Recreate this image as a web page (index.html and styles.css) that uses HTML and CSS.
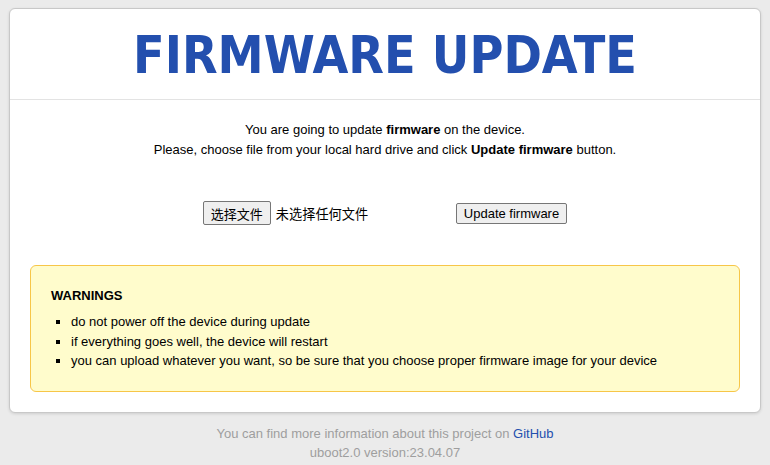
FILE: index.html
```html
<!DOCTYPE html>
<html>
<head>
<meta charset="utf-8">
<title>Firmware update</title>
<link rel="stylesheet" href="styles.css">
</head>
<body>
<div class="card">
  <div class="header"><h1 class="title">FIRMWARE UPDATE</h1></div>
  <div class="content">
    <p class="intro">You are going to update <b>firmware</b> on the device.<br>Please, choose file from your local hard drive and click <b>Update firmware</b> button.</p>
    <form class="upload">
      <span class="file"><span class="btn btn-cjk">选择文件</span><span class="file-name">未选择任何文件</span></span>
      <span class="btn btn-submit">Update firmware</span>
    </form>
    <div class="warnings">
      <strong class="warn-title">WARNINGS</strong>
      <ul class="warn-list">
        <li>do not power off the device during update</li>
        <li>if everything goes well, the device will restart</li>
        <li>you can upload whatever you want, so be sure that you choose proper firmware image for your device</li>
      </ul>
    </div>
  </div>
</div>
<div class="footer">
  <div>You can find more information about this project on <a class="gh" href="#">GitHub</a></div>
  <div>uboot2.0 version:23.04.07</div>
</div>
</body>
</html>
```
FILE: styles.css
```css
html, body { margin: 0; padding: 0; }
body {
  background: #ebebeb;
  font-family: "Liberation Sans", Arial, sans-serif;
  font-size: 13px;
  color: #000;
  padding: 8px 9px 0;
}
.card {
  background: #fff;
  border: 1px solid #c8c8c8;
  border-radius: 6px;
  box-shadow: 0 1px 3px rgba(0,0,0,0.12);
}
.header {
  height: 90px;
  border-bottom: 1px solid #e3e3e3;
  display: flex;
  align-items: center;
  justify-content: center;
}
.title {
  margin: 0;
  font-family: "DejaVu Sans Condensed", "DejaVu Sans", sans-serif;
  font-stretch: condensed;
  font-weight: bold;
  font-size: 51.5px;
  color: #234fae;
  line-height: 1;
  padding-top: 3px;
}
.content {
  padding: 20px 20px 20px;
}
.intro {
  margin: 0;
  text-align: center;
  line-height: 20px;
}
.upload {
  margin-top: 41px;
  display: flex;
  justify-content: center;
  align-items: center;
  gap: 4px;
}
.file {
  width: 249px;
  display: flex;
  align-items: center;
}
.btn {
  display: inline-flex;
  align-items: center;
  justify-content: center;
  box-sizing: border-box;
  border: 1px solid #767676;
  border-radius: 2px;
  background: #efefef;
  color: #000;
}
.btn-cjk {
  font-family: "Noto Sans CJK SC", sans-serif;
  font-size: 13px;
  height: 24px;
  padding: 0 7px;
}
.file-name {
  font-family: "Noto Sans CJK SC", sans-serif;
  font-size: 13.2px;
  margin-left: 5px;
}
.btn-submit {
  height: 21px;
  padding: 0 7px;
  font-size: 13px;
}
.warnings {
  margin-top: 40px;
  background: #fffccc;
  border: 1px solid #f7c648;
  border-radius: 6px;
  padding: 21px 20px 20px;
}
.warn-title {
  display: block;
  font-weight: bold;
  line-height: 18px;
}
.warn-list {
  margin: 7px 0 0;
  padding-left: 20px;
  list-style: square;
  line-height: 19.5px;
}
.footer {
  text-align: center;
  color: #9e9e9e;
  font-size: 13px;
  line-height: 19px;
  padding-top: 11px;
}
.gh { color: #234fae; text-decoration: none; }
```
